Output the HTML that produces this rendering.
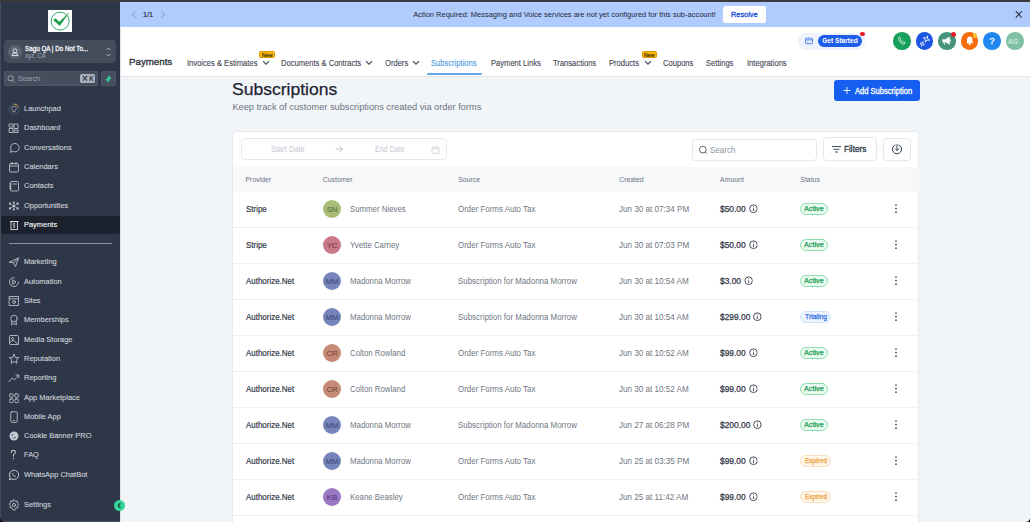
<!DOCTYPE html>
<html><head><meta charset="utf-8"><title>Subscriptions</title>
<style>
html,body{margin:0;padding:0;width:1030px;height:522px;overflow:hidden;background:#f1f5f8;font-family:"Liberation Sans", sans-serif;}
.a{position:absolute;display:block;}
.t{position:absolute;white-space:nowrap;line-height:1;}
</style></head><body>
<div class="a" style="left:0px;top:0px;width:1030px;height:2px;background:#3a3a3a"></div>
<div class="a" style="left:0px;top:2px;width:120px;height:520px;background:#2d3748"></div>
<div class="a" style="left:0px;top:2px;width:1px;height:520px;background:#454d5b"></div>
<div class="a" style="left:48px;top:10px;width:24px;height:22px;background:#fff"></div>
<svg class="a" style="left:48px;top:10px;" width="24" height="22" viewBox="0 0 24 22"><circle cx="12.1" cy="11.1" r="9" fill="none" stroke="#1f9d55" stroke-width="0.9"/><path d="M5.3 10 L7.6 8.4 L11.2 11.9 L20.9 2.9 L11.7 15.8 Z" fill="#1a9a4a" stroke="#1a9a4a" stroke-width="0.3" stroke-linejoin="round"/></svg>
<div class="a" style="left:4px;top:40px;width:112px;height:23px;background:#434c5b;border-radius:4px"></div>
<div class="a" style="left:8px;top:45px;width:14px;height:14px;background:#5a6372;border-radius:50%"></div>
<svg class="a" style="left:8px;top:45px;" width="14" height="14" viewBox="0 0 14 14"><circle cx="7" cy="5.8" r="2" fill="none" stroke="#e5e7eb" stroke-width="0.9"/><path d="M4 10.5 Q4 8 7 8 Q10 8 10 10.5 Z" fill="none" stroke="#e5e7eb" stroke-width="0.9"/></svg>
<div class="t" style="left:24.80px;top:45.86px;font-size:6.9px;color:#f3f4f6;font-weight:400;transform:scaleX(0.9098);transform-origin:0 0;-webkit-text-stroke:0.3px #f3f4f6">Sagu QA | Do Not To...</div>
<div class="t" style="left:24.80px;top:53.41px;font-size:6.6px;color:#a3aab5;font-weight:400;transform:scaleX(0.9067);transform-origin:0 0;">xyz, CA</div>
<svg class="a" style="left:104px;top:46px;" width="9" height="12" viewBox="0 0 9 12"><path d="M2.5 4 L4.5 2 L6.5 4 M2.5 8 L4.5 10 L6.5 8" fill="none" stroke="#c9ced6" stroke-width="0.8"/></svg>
<div class="a" style="left:4px;top:71px;width:94px;height:15px;background:#454e5d;border-radius:3px;box-shadow:inset 0 0 0 0.6px #56606f"></div>
<svg class="a" style="left:6px;top:74px;" width="10" height="10" viewBox="0 0 10 10"><circle cx="4.5" cy="4.3" r="2.6" fill="none" stroke="#a3aab5" stroke-width="0.9"/><path d="M6.4 6.2 L8.6 8.4" stroke="#a3aab5" stroke-width="1"/></svg>
<div class="t" style="left:17.70px;top:75.99px;font-size:7.1px;color:#9aa2ae;font-weight:400;">Search</div>
<div class="a" style="left:79.6px;top:74.3px;width:15.7px;height:8.7px;background:#a9b0bc;border-radius:1.5px"></div>
<svg class="a" style="left:81.5px;top:75.3px;" width="6" height="6.5" viewBox="0 0 6 6.5"><path d="M1.8 1.8 L4.2 4.7 M4.2 1.8 L1.8 4.7" stroke="#3a414d" stroke-width="1.1"/><circle cx="1.4" cy="1.4" r="0.8" fill="#3a414d"/><circle cx="4.6" cy="1.4" r="0.8" fill="#3a414d"/><circle cx="1.4" cy="5.1" r="0.8" fill="#3a414d"/><circle cx="4.6" cy="5.1" r="0.8" fill="#3a414d"/></svg>
<div class="t" style="left:89.20px;top:75.97px;font-size:6.3px;color:#2f3540;font-weight:700;">K</div>
<div class="a" style="left:101px;top:71px;width:15px;height:15px;background:#454e5d;border-radius:3px;box-shadow:inset 0 0 0 0.6px #56606f"></div>
<svg class="a" style="left:101px;top:71px;" width="15" height="15" viewBox="0 0 15 15"><path d="M7.6 4.5 L10.3 7.6 L8.2 8 L7.4 11.1 L4.7 8.6 L6.8 7.8 Z" fill="#34d399" stroke="#34d399" stroke-width="0.5" stroke-linejoin="round"/></svg>
<div class="a" style="left:1px;top:215.6px;width:118.8px;height:18.7px;background:#1c222d;border-radius:2px"></div>
<div class="a" style="left:9px;top:243px;width:103px;height:1px;background:#8a919c"></div>
<svg class="a" style="left:8px;top:102.7px;" width="12" height="12" viewBox="0 0 12 12"><circle cx="6" cy="6" r="5" fill="none" stroke="#566072" stroke-width="0.7"/><path d="M6 1 A5 5 0 0 1 10.5 4" fill="none" stroke="#d9a33a" stroke-width="0.9"/><path d="M6 3 Q8.3 3 8.3 5.3 Q8.3 6.8 7 7.3 L7 8.6 L5 8.6 L5 7.3 Q3.7 6.8 3.7 5.3 Q3.7 3 6 3 Z" fill="none" stroke="#a9afb9" stroke-width="0.75"/></svg>
<div class="t" style="left:23.80px;top:104.71px;font-size:7.9px;color:#d3d6dc;font-weight:400;transform:scaleX(0.9440);transform-origin:0 0;-webkit-text-stroke:0.1px #d3d6dc">Launchpad</div>
<svg class="a" style="left:8px;top:122px;" width="12" height="12" viewBox="0 0 12 12"><rect x="1.5" y="2" width="3.5" height="3" fill="none" stroke="#c3c8d0" stroke-width="0.85" stroke-linecap="round" stroke-linejoin="round"/><rect x="6.5" y="2" width="3.5" height="4.5" fill="none" stroke="#c3c8d0" stroke-width="0.85" stroke-linecap="round" stroke-linejoin="round"/><rect x="1.5" y="6.5" width="3.5" height="4" fill="none" stroke="#c3c8d0" stroke-width="0.85" stroke-linecap="round" stroke-linejoin="round"/><rect x="6.5" y="8" width="3.5" height="2.5" fill="none" stroke="#c3c8d0" stroke-width="0.85" stroke-linecap="round" stroke-linejoin="round"/></svg>
<div class="t" style="left:23.80px;top:124.01px;font-size:7.9px;color:#d3d6dc;font-weight:400;transform:scaleX(0.9440);transform-origin:0 0;-webkit-text-stroke:0.1px #d3d6dc">Dashboard</div>
<svg class="a" style="left:8px;top:141.5px;" width="12" height="12" viewBox="0 0 12 12"><path d="M2.5 10 L3.2 8 A4.3 4.3 0 1 1 5 9.6 Z" fill="none" stroke="#c3c8d0" stroke-width="0.85" stroke-linecap="round" stroke-linejoin="round"/></svg>
<div class="t" style="left:23.80px;top:143.51px;font-size:7.9px;color:#d3d6dc;font-weight:400;transform:scaleX(0.9440);transform-origin:0 0;-webkit-text-stroke:0.1px #d3d6dc">Conversations</div>
<svg class="a" style="left:8px;top:160.8px;" width="12" height="12" viewBox="0 0 12 12"><rect x="1.5" y="2.5" width="9" height="8.5" rx="1" fill="none" stroke="#c3c8d0" stroke-width="0.85" stroke-linecap="round" stroke-linejoin="round"/><path d="M1.5 5 L10.5 5 M4 1.3 L4 3.3 M8 1.3 L8 3.3" fill="none" stroke="#c3c8d0" stroke-width="0.85" stroke-linecap="round" stroke-linejoin="round"/></svg>
<div class="t" style="left:23.80px;top:162.81px;font-size:7.9px;color:#d3d6dc;font-weight:400;transform:scaleX(0.9440);transform-origin:0 0;-webkit-text-stroke:0.1px #d3d6dc">Calendars</div>
<svg class="a" style="left:8px;top:180px;" width="12" height="12" viewBox="0 0 12 12"><rect x="2.5" y="1.5" width="8" height="9.5" rx="1" fill="none" stroke="#c3c8d0" stroke-width="0.85" stroke-linecap="round" stroke-linejoin="round"/><path d="M1.5 4 L3.3 4 M1.5 6.3 L3.3 6.3 M1.5 8.6 L3.3 8.6 M5 4 L8.5 4" fill="none" stroke="#c3c8d0" stroke-width="0.85" stroke-linecap="round" stroke-linejoin="round"/></svg>
<div class="t" style="left:23.80px;top:182.01px;font-size:7.9px;color:#d3d6dc;font-weight:400;transform:scaleX(0.9440);transform-origin:0 0;-webkit-text-stroke:0.1px #d3d6dc">Contacts</div>
<svg class="a" style="left:8px;top:199.6px;" width="12" height="12" viewBox="0 0 12 12"><path d="M5.8 6 L5.8 2.6 M5.8 6 L2 3.6 M5.8 6 L9.6 3.6 M5.8 6 L2 8.4 M5.8 6 L9.6 8.4 M5.8 6 L5.8 9.4" stroke="#c3c8d0" stroke-width="0.6"/><circle cx="5.8" cy="6" r="1.3" fill="#c3c8d0"/><circle cx="5.8" cy="2.4" r="1" fill="#c3c8d0"/><rect x="1" y="2.6" width="2" height="2" fill="#c3c8d0"/><rect x="8.6" y="2.6" width="2" height="2" fill="#c3c8d0"/><rect x="1" y="7.4" width="2" height="2" fill="#c3c8d0"/><rect x="8.6" y="7.4" width="2" height="2" fill="#c3c8d0"/><circle cx="5.8" cy="9.6" r="1" fill="#c3c8d0"/></svg>
<div class="t" style="left:23.80px;top:201.61px;font-size:7.9px;color:#d3d6dc;font-weight:400;transform:scaleX(0.9440);transform-origin:0 0;-webkit-text-stroke:0.1px #d3d6dc">Opportunities</div>
<svg class="a" style="left:8px;top:218.9px;" width="12" height="12" viewBox="0 0 12 12"><rect x="3" y="2.6" width="6.4" height="8" fill="none" stroke="#e5e7eb" stroke-width="0.85"/><path d="M1.9 2.6 L10.5 2.6" stroke="#e5e7eb" stroke-width="0.9"/><path d="M7 4.6 L5.4 4.6 Q4.7 5.7 6 6.3 Q7.3 6.9 6.4 8.2 L5 8.2 M6.1 4 L6.1 8.9" fill="none" stroke="#e5e7eb" stroke-width="0.65"/></svg>
<div class="t" style="left:23.80px;top:220.91px;font-size:7.9px;color:#ffffff;font-weight:500;transform:scaleX(0.9440);transform-origin:0 0;-webkit-text-stroke:0.1px #ffffff">Payments</div>
<svg class="a" style="left:8px;top:255.89999999999998px;" width="12" height="12" viewBox="0 0 12 12"><path d="M1.5 6 L10.5 2 L7.5 10.5 L5.5 7 Z M5.5 7 L10.5 2" fill="none" stroke="#c3c8d0" stroke-width="0.85" stroke-linecap="round" stroke-linejoin="round"/></svg>
<div class="t" style="left:23.80px;top:257.91px;font-size:7.9px;color:#d3d6dc;font-weight:400;transform:scaleX(0.9440);transform-origin:0 0;-webkit-text-stroke:0.1px #d3d6dc">Marketing</div>
<svg class="a" style="left:8px;top:275.5px;" width="12" height="12" viewBox="0 0 12 12"><path d="M10.5 6 A4.5 4.5 0 1 1 6 1.5" fill="none" stroke="#c3c8d0" stroke-width="0.85" stroke-linecap="round" stroke-linejoin="round"/><path d="M5 4 L8 6 L5 8 Z" fill="none" stroke="#c3c8d0" stroke-width="0.85" stroke-linecap="round" stroke-linejoin="round"/></svg>
<div class="t" style="left:23.80px;top:277.51px;font-size:7.9px;color:#d3d6dc;font-weight:400;transform:scaleX(0.9440);transform-origin:0 0;-webkit-text-stroke:0.1px #d3d6dc">Automation</div>
<svg class="a" style="left:8px;top:294.8px;" width="12" height="12" viewBox="0 0 12 12"><rect x="1.5" y="1.5" width="9" height="9" fill="none" stroke="#c3c8d0" stroke-width="0.85" stroke-linecap="round" stroke-linejoin="round"/><path d="M1.5 3.8 L10.5 3.8" fill="none" stroke="#c3c8d0" stroke-width="0.85" stroke-linecap="round" stroke-linejoin="round"/><circle cx="6" cy="7" r="1.5" fill="none" stroke="#c3c8d0" stroke-width="0.85" stroke-linecap="round" stroke-linejoin="round"/></svg>
<div class="t" style="left:23.80px;top:296.81px;font-size:7.9px;color:#d3d6dc;font-weight:400;transform:scaleX(0.9440);transform-origin:0 0;-webkit-text-stroke:0.1px #d3d6dc">Sites</div>
<svg class="a" style="left:8px;top:314px;" width="12" height="12" viewBox="0 0 12 12"><circle cx="6" cy="4.5" r="3.3" fill="none" stroke="#c3c8d0" stroke-width="0.85" stroke-linecap="round" stroke-linejoin="round"/><path d="M4 7.3 L3.5 10.8 L6 9.5 L8.5 10.8 L8 7.3" fill="none" stroke="#c3c8d0" stroke-width="0.85" stroke-linecap="round" stroke-linejoin="round"/></svg>
<div class="t" style="left:23.80px;top:316.01px;font-size:7.9px;color:#d3d6dc;font-weight:400;transform:scaleX(0.9440);transform-origin:0 0;-webkit-text-stroke:0.1px #d3d6dc">Memberships</div>
<svg class="a" style="left:8px;top:333.6px;" width="12" height="12" viewBox="0 0 12 12"><rect x="1.5" y="1.5" width="9" height="9" rx="1" fill="none" stroke="#c3c8d0" stroke-width="0.85" stroke-linecap="round" stroke-linejoin="round"/><circle cx="4.5" cy="4.5" r="1" fill="none" stroke="#c3c8d0" stroke-width="0.85" stroke-linecap="round" stroke-linejoin="round"/><path d="M1.5 9 L5 6 L10.5 10.5" fill="none" stroke="#c3c8d0" stroke-width="0.85" stroke-linecap="round" stroke-linejoin="round"/></svg>
<div class="t" style="left:23.80px;top:335.61px;font-size:7.9px;color:#d3d6dc;font-weight:400;transform:scaleX(0.9440);transform-origin:0 0;-webkit-text-stroke:0.1px #d3d6dc">Media Storage</div>
<svg class="a" style="left:8px;top:352.8px;" width="12" height="12" viewBox="0 0 12 12"><path d="M6 1.3 L7.4 4.4 L10.7 4.7 L8.2 6.9 L9 10.2 L6 8.5 L3 10.2 L3.8 6.9 L1.3 4.7 L4.6 4.4 Z" fill="none" stroke="#c3c8d0" stroke-width="0.85" stroke-linecap="round" stroke-linejoin="round"/></svg>
<div class="t" style="left:23.80px;top:354.81px;font-size:7.9px;color:#d3d6dc;font-weight:400;transform:scaleX(0.9440);transform-origin:0 0;-webkit-text-stroke:0.1px #d3d6dc">Reputation</div>
<svg class="a" style="left:8px;top:372.2px;" width="12" height="12" viewBox="0 0 12 12"><path d="M1 9.5 L4.3 6 L6.3 7.8 L10.8 3.2 M8 3 L10.8 3 L10.8 5.8" fill="none" stroke="#c3c8d0" stroke-width="0.85" stroke-linecap="round" stroke-linejoin="round"/></svg>
<div class="t" style="left:23.80px;top:374.21px;font-size:7.9px;color:#d3d6dc;font-weight:400;transform:scaleX(0.9440);transform-origin:0 0;-webkit-text-stroke:0.1px #d3d6dc">Reporting</div>
<svg class="a" style="left:8px;top:391.7px;" width="12" height="12" viewBox="0 0 12 12"><rect x="1.6" y="1.8" width="3.6" height="3.6" rx="1.1" fill="none" stroke="#c3c8d0" stroke-width="0.85" stroke-linecap="round" stroke-linejoin="round"/><rect x="6.8" y="1.8" width="3.6" height="3.6" rx="1.1" fill="none" stroke="#c3c8d0" stroke-width="0.85" stroke-linecap="round" stroke-linejoin="round"/><rect x="1.6" y="7" width="3.6" height="3.6" rx="1.1" fill="none" stroke="#c3c8d0" stroke-width="0.85" stroke-linecap="round" stroke-linejoin="round"/><rect x="6.8" y="7" width="3.6" height="3.6" rx="1.1" fill="none" stroke="#c3c8d0" stroke-width="0.85" stroke-linecap="round" stroke-linejoin="round"/></svg>
<div class="t" style="left:23.80px;top:393.71px;font-size:7.9px;color:#d3d6dc;font-weight:400;transform:scaleX(0.9440);transform-origin:0 0;-webkit-text-stroke:0.1px #d3d6dc">App Marketplace</div>
<svg class="a" style="left:8px;top:410.6px;" width="12" height="12" viewBox="0 0 12 12"><rect x="2.8" y="0.8" width="6.4" height="10.5" rx="1" fill="none" stroke="#c3c8d0" stroke-width="0.85" stroke-linecap="round" stroke-linejoin="round"/><path d="M5.5 9.5 L6.5 9.5" fill="none" stroke="#c3c8d0" stroke-width="0.85" stroke-linecap="round" stroke-linejoin="round"/></svg>
<div class="t" style="left:23.80px;top:412.61px;font-size:7.9px;color:#d3d6dc;font-weight:400;transform:scaleX(0.9440);transform-origin:0 0;-webkit-text-stroke:0.1px #d3d6dc">Mobile App</div>
<svg class="a" style="left:8px;top:430.2px;" width="12" height="12" viewBox="0 0 12 12"><circle cx="6" cy="6" r="4.5" fill="#c3c8d0"/><circle cx="4.5" cy="5" r="0.7" fill="#2d3748"/><circle cx="7" cy="7.5" r="0.7" fill="#2d3748"/><circle cx="5" cy="8" r="0.5" fill="#2d3748"/></svg>
<div class="t" style="left:23.80px;top:432.21px;font-size:7.9px;color:#d3d6dc;font-weight:400;transform:scaleX(0.9440);transform-origin:0 0;-webkit-text-stroke:0.1px #d3d6dc">Cookie Banner PRO</div>
<svg class="a" style="left:8px;top:449.4px;" width="12" height="12" viewBox="0 0 12 12"><path d="M3.2 3.6 Q3.2 1.2 5.3 1.2 Q7.4 1.2 7.4 3.3 Q7.4 4.6 5.5 5.6 L5.5 7.2" fill="none" stroke="#c3c8d0" stroke-width="1.05" stroke-linecap="round"/><circle cx="5.5" cy="9.4" r="0.65" fill="#c3c8d0"/></svg>
<div class="t" style="left:23.80px;top:451.41px;font-size:7.9px;color:#d3d6dc;font-weight:400;transform:scaleX(0.9440);transform-origin:0 0;-webkit-text-stroke:0.1px #d3d6dc">FAQ</div>
<svg class="a" style="left:8px;top:469px;" width="12" height="12" viewBox="0 0 12 12"><path d="M1.3 10.7 L2.1 8.1 A4.6 4.6 0 1 1 4 9.9 Z" fill="none" stroke="#c3c8d0" stroke-width="1" stroke-linejoin="round"/><path d="M4.3 4.2 Q4.2 7.6 7.7 7.7 L8 6.9 L7 6.4 L6.5 6.9 Q5.3 6.4 4.9 5.2 L5.4 4.7 L5 3.8 Z" fill="#c3c8d0"/></svg>
<div class="t" style="left:23.80px;top:471.01px;font-size:7.9px;color:#d3d6dc;font-weight:400;transform:scaleX(0.9440);transform-origin:0 0;-webkit-text-stroke:0.1px #d3d6dc">WhatsApp ChatBot</div>
<svg class="a" style="left:8px;top:499px;" width="12" height="12" viewBox="0 0 12 12"><path d="M6 0.8 L7.2 2.2 L9.3 1.9 L9.3 3.9 L10.9 5.2 L9.6 6.6 L10 8.7 L8 8.9 L7 10.8 L6 11.2 L5 10.8 L4 8.9 L2 8.7 L2.4 6.6 L1.1 5.2 L2.7 3.9 L2.7 1.9 L4.8 2.2 Z" fill="none" stroke="#c3c8d0" stroke-width="0.85" stroke-linecap="round" stroke-linejoin="round"/><circle cx="6" cy="6" r="1.6" fill="none" stroke="#c3c8d0" stroke-width="0.85" stroke-linecap="round" stroke-linejoin="round"/></svg>
<div class="t" style="left:23.80px;top:501.01px;font-size:7.9px;color:#d3d6dc;font-weight:400;transform:scaleX(0.9440);transform-origin:0 0;-webkit-text-stroke:0.1px #d3d6dc">Settings</div>
<div class="a" style="left:120px;top:2px;width:910px;height:25px;background:#b0cbfd"></div>
<svg class="a" style="left:130px;top:10px;" width="8" height="9" viewBox="0 0 8 9"><path d="M5.5 1.5 L2.5 4.6 L5.5 7.7" fill="none" stroke="#7d8ba3" stroke-width="0.9"/></svg>
<div class="t" style="left:143.10px;top:10.88px;font-size:7.7px;color:#2d3340;font-weight:400;transform:scaleX(0.9544);transform-origin:0 0;-webkit-text-stroke:0.2px #2d3340">1/1</div>
<svg class="a" style="left:159px;top:10px;" width="8" height="9" viewBox="0 0 8 9"><path d="M2.5 1.5 L5.5 4.6 L2.5 7.7" fill="none" stroke="#7d8ba3" stroke-width="0.9"/></svg>
<div class="t" style="left:413.20px;top:10.85px;font-size:7.5px;color:#1f2937;font-weight:400;">Action Required: Messaging and Voice services are not yet configured for this sub-account!</div>
<div class="a" style="left:723px;top:6px;width:43px;height:17px;background:#fff;border-radius:2.5px"></div>
<div class="t" style="left:731.30px;top:10.98px;font-size:7.7px;color:#1d4fd8;font-weight:400;transform:scaleX(0.9575);transform-origin:0 0;-webkit-text-stroke:0.3px #1d4fd8">Resolve</div>
<svg class="a" style="left:1014px;top:10px;" width="9" height="9" viewBox="0 0 9 9"><path d="M1.8 1.2 L7.8 7.7 M7.8 1.2 L1.8 7.7" stroke="#2f3646" stroke-width="1.1"/></svg>
<div class="a" style="left:120px;top:27px;width:910px;height:49px;background:#ffffff"></div>
<div class="a" style="left:120px;top:75.5px;width:910px;height:1.2px;background:#e4e7eb"></div>
<div class="a" style="left:120px;top:76.7px;width:910px;height:446px;background:#f1f5f8"></div>
<div class="a" style="left:120px;top:27px;width:1px;height:495px;background:#dfe3e8"></div>
<div class="t" style="left:129.10px;top:57.29px;font-size:9.7px;color:#2f3542;font-weight:400;-webkit-text-stroke:0.35px #2f3542">Payments</div>
<div class="t" style="left:187.20px;top:59.86px;font-size:8.2px;color:#3f4654;font-weight:400;transform:scaleX(0.9268);transform-origin:0 0;-webkit-text-stroke:0.1px #3f4654">Invoices &amp; Estimates</div>
<div class="t" style="left:281.20px;top:59.86px;font-size:8.2px;color:#3f4654;font-weight:400;transform:scaleX(0.9268);transform-origin:0 0;-webkit-text-stroke:0.1px #3f4654">Documents &amp; Contracts</div>
<div class="t" style="left:384.50px;top:59.86px;font-size:8.2px;color:#3f4654;font-weight:400;transform:scaleX(0.9268);transform-origin:0 0;-webkit-text-stroke:0.1px #3f4654">Orders</div>
<div class="t" style="left:431.00px;top:59.86px;font-size:8.2px;color:#4b9be6;font-weight:400;transform:scaleX(0.9268);transform-origin:0 0;-webkit-text-stroke:0.1px #4b9be6">Subscriptions</div>
<div class="t" style="left:490.50px;top:59.86px;font-size:8.2px;color:#3f4654;font-weight:400;transform:scaleX(0.9268);transform-origin:0 0;-webkit-text-stroke:0.1px #3f4654">Payment Links</div>
<div class="t" style="left:552.60px;top:59.86px;font-size:8.2px;color:#3f4654;font-weight:400;transform:scaleX(0.9268);transform-origin:0 0;-webkit-text-stroke:0.1px #3f4654">Transactions</div>
<div class="t" style="left:609.30px;top:59.86px;font-size:8.2px;color:#3f4654;font-weight:400;transform:scaleX(0.9268);transform-origin:0 0;-webkit-text-stroke:0.1px #3f4654">Products</div>
<div class="t" style="left:663.30px;top:59.86px;font-size:8.2px;color:#3f4654;font-weight:400;transform:scaleX(0.9268);transform-origin:0 0;-webkit-text-stroke:0.1px #3f4654">Coupons</div>
<div class="t" style="left:706.00px;top:59.86px;font-size:8.2px;color:#3f4654;font-weight:400;transform:scaleX(0.9268);transform-origin:0 0;-webkit-text-stroke:0.1px #3f4654">Settings</div>
<div class="t" style="left:746.80px;top:59.86px;font-size:8.2px;color:#3f4654;font-weight:400;transform:scaleX(0.9268);transform-origin:0 0;-webkit-text-stroke:0.1px #3f4654">Integrations</div>
<svg class="a" style="left:261.5px;top:59.9px;" width="8" height="6" viewBox="0 0 8 6"><path d="M1.1 1.3 L4 4.1 L6.9 1.3" fill="none" stroke="#4b5261" stroke-width="1.2"/></svg>
<svg class="a" style="left:365px;top:59.9px;" width="8" height="6" viewBox="0 0 8 6"><path d="M1.1 1.3 L4 4.1 L6.9 1.3" fill="none" stroke="#4b5261" stroke-width="1.2"/></svg>
<svg class="a" style="left:411.5px;top:59.9px;" width="8" height="6" viewBox="0 0 8 6"><path d="M1.1 1.3 L4 4.1 L6.9 1.3" fill="none" stroke="#4b5261" stroke-width="1.2"/></svg>
<svg class="a" style="left:643.5px;top:59.9px;" width="8" height="6" viewBox="0 0 8 6"><path d="M1.1 1.3 L4 4.1 L6.9 1.3" fill="none" stroke="#4b5261" stroke-width="1.2"/></svg>
<div class="a" style="left:426.6px;top:73.2px;width:55px;height:2px;background:#5fa8ee;border-radius:1px"></div>
<div class="a" style="left:259.2px;top:51.3px;width:15.6px;height:7.2px;background:#f6b40b;border:0.6px solid #e09a00;border-radius:1.5px;box-sizing:border-box"></div>
<div class="t" style="left:261.80px;top:52.73px;font-size:5.4px;color:#4a3800;font-weight:400;transform:scaleX(0.9632);transform-origin:0 0;-webkit-text-stroke:0.2px #4a3800">New</div>
<div class="a" style="left:641.5px;top:51.3px;width:15.6px;height:7.2px;background:#f6b40b;border:0.6px solid #e09a00;border-radius:1.5px;box-sizing:border-box"></div>
<div class="t" style="left:644.10px;top:52.73px;font-size:5.4px;color:#4a3800;font-weight:400;transform:scaleX(0.9632);transform-origin:0 0;-webkit-text-stroke:0.2px #4a3800">New</div>
<div class="a" style="left:798px;top:33px;width:67px;height:16.5px;background:#eef2fb;border-radius:8px"></div>
<svg class="a" style="left:804px;top:37px;" width="10" height="8" viewBox="0 0 10 8"><rect x="1.5" y="1.2" width="7" height="5.4" rx="0.7" fill="none" stroke="#4a7ce6" stroke-width="0.9"/><path d="M1.5 2.9 L8.5 2.9" stroke="#4a7ce6" stroke-width="0.9"/><path d="M2.6 5 L4.4 5" stroke="#4a7ce6" stroke-width="0.6"/></svg>
<div class="a" style="left:818px;top:35px;width:43.6px;height:12px;background:#1f5ee8;border-radius:6px"></div>
<div class="t" style="left:822.20px;top:38.01px;font-size:6.6px;color:#ffffff;font-weight:700;">Get Started</div>
<div class="a" style="left:860.2px;top:31.6px;width:4.5px;height:4.5px;background:#e11d2a;border-radius:50%"></div>
<div class="a" style="left:893.3px;top:32.2px;width:17.4px;height:17.4px;background:#16a05a;border-radius:50%"></div>
<svg class="a" style="left:893.3px;top:32.2px;" width="17.4" height="17.4" viewBox="0 0 17.4 17.4"><path d="M6 5.3 Q6.4 4.8 7 5.4 L7.8 6.6 Q8 7.1 7.5 7.5 Q8.1 9.2 9.7 10 Q10.1 9.5 10.6 9.7 L11.8 10.4 Q12.3 10.9 11.8 11.4 Q10.8 12.5 9.3 11.8 Q6.5 10.3 5.6 7.3 Q5.3 6 6 5.3 Z" fill="none" stroke="#fff" stroke-width="0.8"/></svg>
<div class="a" style="left:916.0px;top:32.2px;width:17.4px;height:17.4px;background:#1d56e0;border-radius:50%"></div>
<svg class="a" style="left:916.0px;top:32.2px;" width="17.4" height="17.4" viewBox="0 0 17.4 17.4"><path d="M10.4 3.6 L11.2 6.2 L13.8 7 L11.2 7.8 L10.4 10.4 L9.6 7.8 L7 7 L9.6 6.2 Z" fill="none" stroke="#fff" stroke-width="0.75" stroke-linejoin="round" transform="rotate(20 10.4 7)"/><path d="M6.2 9.6 L6.8 11.4 L8.6 12 L6.8 12.6 L6.2 14.4 L5.6 12.6 L3.8 12 L5.6 11.4 Z" fill="none" stroke="#fff" stroke-width="0.7" stroke-linejoin="round" transform="rotate(20 6.2 12)"/></svg>
<div class="a" style="left:938.3px;top:32.2px;width:17.4px;height:17.4px;background:#45937a;border-radius:50%"></div>
<svg class="a" style="left:938.3px;top:32.2px;" width="17.4" height="17.4" viewBox="0 0 17.4 17.4"><path d="M4.6 7.4 L7.2 7.4 L11.6 4.8 L11.6 12.4 L7.2 9.9 L4.6 9.9 Z" fill="#fff" stroke="#fff" stroke-width="0.4" stroke-linejoin="round"/><path d="M5.8 9.9 L6.6 12.6" stroke="#fff" stroke-width="1.1"/><path d="M12.6 7.6 L12.6 9.6" stroke="#fff" stroke-width="0.8"/></svg>
<div class="a" style="left:950.5px;top:31.8px;width:5.6px;height:5.6px;background:#e11d2a;border-radius:50%"></div>
<div class="a" style="left:961.0px;top:32.2px;width:17.4px;height:17.4px;background:#f86c0c;border-radius:50%"></div>
<svg class="a" style="left:961.0px;top:32.2px;" width="17.4" height="17.4" viewBox="0 0 17.4 17.4"><path d="M8.7 4.5 Q11.5 4.8 11.5 8 L11.5 10.3 L12.5 11.3 L5 11.3 L6 10.3 L6 8 Q6 4.8 8.7 4.5 Z" fill="#fff"/><circle cx="8.7" cy="12.3" r="1" fill="#fff"/></svg>
<div class="a" style="left:972.8px;top:33.2px;width:4.4px;height:4.4px;background:#f7c331;border-radius:50%"></div>
<div class="a" style="left:983.3px;top:32.2px;width:17.4px;height:17.4px;background:#1e88f0;border-radius:50%"></div>
<svg class="a" style="left:983.3px;top:32.2px;" width="17.4" height="17.4" viewBox="0 0 17.4 17.4"></svg>
<div class="t" style="left:989.50px;top:37.18px;font-size:9px;color:#ffffff;font-weight:400;-webkit-text-stroke:0.3px #fff">?</div>
<div class="a" style="left:1006.3px;top:32.2px;width:17.4px;height:17.4px;background:#7fbfa5;border-radius:50%"></div>
<svg class="a" style="left:1006.3px;top:32.2px;" width="17.4" height="17.4" viewBox="0 0 17.4 17.4"></svg>
<div class="t" style="left:1008.00px;top:37.87px;font-size:7.6px;color:#e6f3ec;font-weight:400;">AS</div>
<div class="t" style="left:232.40px;top:82.45px;font-size:16.6px;color:#1f2433;font-weight:400;transform:scaleX(1.0560);transform-origin:0 0;-webkit-text-stroke:0.25px #1f2433">Subscriptions</div>
<div class="t" style="left:232.40px;top:102.78px;font-size:9.24px;color:#6b7280;font-weight:400;">Keep track of customer subscriptions created via order forms</div>
<div class="a" style="left:834.2px;top:80.2px;width:85.7px;height:21.2px;background:#155eef;border-radius:3px"></div>
<svg class="a" style="left:843px;top:86px;" width="8" height="9" viewBox="0 0 8 9"><path d="M4 1 L4 8 M0.5 4.5 L7.5 4.5" stroke="#fff" stroke-width="0.9"/></svg>
<div class="t" style="left:854.90px;top:86.87px;font-size:8.3px;color:#ffffff;font-weight:400;transform:scaleX(0.9118);transform-origin:0 0;-webkit-text-stroke:0.3px #fff">Add Subscription</div>
<div class="a" style="left:232.1px;top:130.6px;width:687.3px;height:400px;background:#fff;border:0.9px solid #e5e9ee;border-radius:4px;box-sizing:border-box"></div>
<div class="a" style="left:241.1px;top:138.2px;width:205.6px;height:22.2px;border:0.8px solid #e6e8ec;border-radius:3.5px;box-sizing:border-box"></div>
<div class="t" style="left:271.00px;top:145.56px;font-size:8.2px;color:#c5c9d0;font-weight:400;transform:scaleX(0.9166);transform-origin:0 0;">Start Date</div>
<svg class="a" style="left:334px;top:145px;" width="10" height="8" viewBox="0 0 10 8"><path d="M1.5 4 L8.5 4 M5.5 1 L8.5 4 L5.5 7" fill="none" stroke="#a9aeb6" stroke-width="0.75"/></svg>
<div class="t" style="left:375.00px;top:145.56px;font-size:8.2px;color:#c5c9d0;font-weight:400;transform:scaleX(0.8582);transform-origin:0 0;">End Date</div>
<svg class="a" style="left:431px;top:145.5px;" width="9" height="9" viewBox="0 0 9 9"><rect x="1" y="1" width="7" height="6.3" rx="0.7" fill="none" stroke="#c9cdd3" stroke-width="0.8"/><path d="M1 2.6 L8 2.6" stroke="#c9cdd3" stroke-width="0.8"/></svg>
<div class="a" style="left:691.6px;top:138.5px;width:125.2px;height:22.1px;border:0.8px solid #e4e8ed;border-radius:3.5px;box-sizing:border-box"></div>
<svg class="a" style="left:698px;top:144.6px;" width="10" height="10" viewBox="0 0 10 10"><circle cx="4.8" cy="4.6" r="3.4" fill="none" stroke="#4b5563" stroke-width="0.9"/><path d="M7.2 7.2 L8.8 8.8" stroke="#4b5563" stroke-width="0.9"/></svg>
<div class="t" style="left:709.70px;top:145.69px;font-size:8.4px;color:#8b93a0;font-weight:400;transform:scaleX(0.9568);transform-origin:0 0;">Search</div>
<div class="a" style="left:822.9px;top:137px;width:54.2px;height:24.3px;border:0.8px solid #e4e8ed;border-radius:3.5px;box-sizing:border-box"></div>
<svg class="a" style="left:831px;top:145px;" width="11" height="9" viewBox="0 0 11 9"><path d="M1 1.5 L10 1.5 M2.5 4.3 L8.5 4.3 M4 7 L7 7" stroke="#374151" stroke-width="0.95"/></svg>
<div class="t" style="left:844.10px;top:145.07px;font-size:8.3px;color:#2f3646;font-weight:400;transform:scaleX(0.9870);transform-origin:0 0;-webkit-text-stroke:0.3px #2f3646">Filters</div>
<div class="a" style="left:883.2px;top:137.5px;width:27.4px;height:23.3px;border:0.8px solid #e4e8ed;border-radius:3.5px;box-sizing:border-box"></div>
<svg class="a" style="left:890.6px;top:143.3px;" width="12" height="12" viewBox="0 0 12 12"><path d="M4.3 1.9 A4.6 4.6 0 1 0 7.7 1.9" fill="none" stroke="#374151" stroke-width="1"/><path d="M6 1.2 L6 7.6 M4 5.6 L6 7.6 L8 5.6" fill="none" stroke="#374151" stroke-width="1"/></svg>
<div class="a" style="left:232.8px;top:166.8px;width:686.3px;height:25.2px;background:#f7f8fa"></div>
<div class="t" style="left:245.50px;top:177.16px;font-size:6.9px;color:#6b7280;font-weight:400;">Provider</div>
<div class="t" style="left:322.80px;top:177.16px;font-size:6.9px;color:#6b7280;font-weight:400;">Customer</div>
<div class="t" style="left:458.20px;top:177.16px;font-size:6.9px;color:#6b7280;font-weight:400;">Source</div>
<div class="t" style="left:619.20px;top:177.16px;font-size:6.9px;color:#6b7280;font-weight:400;">Created</div>
<div class="t" style="left:720.10px;top:177.16px;font-size:6.9px;color:#6b7280;font-weight:400;">Amount</div>
<div class="t" style="left:800.30px;top:177.16px;font-size:6.9px;color:#6b7280;font-weight:400;">Status</div>
<div class="a" style="left:232.8px;top:226.7px;width:686.3px;height:0.9px;background:#eef0f3"></div>
<div class="t" style="left:245.50px;top:205.30px;font-size:8.5px;color:#2f3646;font-weight:400;transform:scaleX(0.9353);transform-origin:0 0;-webkit-text-stroke:0.18px #2f3646">Stripe</div>
<div class="a" style="left:322.8px;top:199.9px;width:18.4px;height:18.4px;background:#a9bd76;border-radius:50%"></div>
<div class="t" style="left:322.80px;top:205.53px;font-size:8px;color:#466a3a;font-weight:400;width:18.4px;text-align:center;letter-spacing:-0.2px">SN</div>
<div class="t" style="left:350.00px;top:205.30px;font-size:8.5px;color:#6f7684;font-weight:400;transform:scaleX(0.9212);transform-origin:0 0;">Summer Nieves</div>
<div class="t" style="left:458.20px;top:205.30px;font-size:8.5px;color:#6f7684;font-weight:400;transform:scaleX(0.9329);transform-origin:0 0;">Order Forms Auto Tax</div>
<div class="t" style="left:619.10px;top:205.22px;font-size:8.6px;color:#6f7684;font-weight:400;transform:scaleX(0.9419);transform-origin:0 0;">Jun 30 at 07:34 PM</div>
<div class="t" style="left:720.10px;top:205.14px;font-size:8.7px;color:#2f3646;font-weight:400;transform:scaleX(0.9650);transform-origin:0 0;-webkit-text-stroke:0.25px #2f3646">$50.00<svg width="9.4" height="9.4" viewBox="0 0 9.4 9.4" style="margin-left:3px;vertical-align:top;position:relative;top:-0.9px"><circle cx="4.7" cy="4.7" r="3.9" fill="none" stroke="#3b4350" stroke-width="0.95"/><path d="M4.7 4.3 L4.7 7" stroke="#3b4350" stroke-width="0.95"/><circle cx="4.7" cy="2.8" r="0.55" fill="#3b4350"/></svg></div>
<div class="a" style="left:800.3px;top:202.9px;width:28px;height:12.2px;background:#ecfbf2;border:0.9px solid #8be0ae;border-radius:6px;box-sizing:border-box"></div>
<div class="t" style="left:804.45px;top:206.31px;font-size:6.6px;color:#1e9e55;font-weight:400;transform:scaleX(1.0963);transform-origin:0 0;-webkit-text-stroke:0.25px #1e9e55">Active</div>
<svg class="a" style="left:893.5px;top:204.1px;" width="4" height="10" viewBox="0 0 4 10"><circle cx="2" cy="1" r="0.85" fill="#374151"/><circle cx="2" cy="4.6" r="0.85" fill="#374151"/><circle cx="2" cy="8.2" r="0.85" fill="#374151"/></svg>
<div class="a" style="left:232.8px;top:262.7px;width:686.3px;height:0.9px;background:#eef0f3"></div>
<div class="t" style="left:245.50px;top:241.30px;font-size:8.5px;color:#2f3646;font-weight:400;transform:scaleX(0.9353);transform-origin:0 0;-webkit-text-stroke:0.18px #2f3646">Stripe</div>
<div class="a" style="left:322.8px;top:235.9px;width:18.4px;height:18.4px;background:#c97987;border-radius:50%"></div>
<div class="t" style="left:322.80px;top:241.53px;font-size:8px;color:#6b3540;font-weight:400;width:18.4px;text-align:center;letter-spacing:-0.2px">YC</div>
<div class="t" style="left:350.00px;top:241.30px;font-size:8.5px;color:#6f7684;font-weight:400;transform:scaleX(0.9212);transform-origin:0 0;">Yvette Carney</div>
<div class="t" style="left:458.20px;top:241.30px;font-size:8.5px;color:#6f7684;font-weight:400;transform:scaleX(0.9329);transform-origin:0 0;">Order Forms Auto Tax</div>
<div class="t" style="left:619.10px;top:241.22px;font-size:8.6px;color:#6f7684;font-weight:400;transform:scaleX(0.9419);transform-origin:0 0;">Jun 30 at 07:03 PM</div>
<div class="t" style="left:720.10px;top:241.14px;font-size:8.7px;color:#2f3646;font-weight:400;transform:scaleX(0.9650);transform-origin:0 0;-webkit-text-stroke:0.25px #2f3646">$50.00<svg width="9.4" height="9.4" viewBox="0 0 9.4 9.4" style="margin-left:3px;vertical-align:top;position:relative;top:-0.9px"><circle cx="4.7" cy="4.7" r="3.9" fill="none" stroke="#3b4350" stroke-width="0.95"/><path d="M4.7 4.3 L4.7 7" stroke="#3b4350" stroke-width="0.95"/><circle cx="4.7" cy="2.8" r="0.55" fill="#3b4350"/></svg></div>
<div class="a" style="left:800.3px;top:238.9px;width:28px;height:12.2px;background:#ecfbf2;border:0.9px solid #8be0ae;border-radius:6px;box-sizing:border-box"></div>
<div class="t" style="left:804.45px;top:242.31px;font-size:6.6px;color:#1e9e55;font-weight:400;transform:scaleX(1.0963);transform-origin:0 0;-webkit-text-stroke:0.25px #1e9e55">Active</div>
<svg class="a" style="left:893.5px;top:240.1px;" width="4" height="10" viewBox="0 0 4 10"><circle cx="2" cy="1" r="0.85" fill="#374151"/><circle cx="2" cy="4.6" r="0.85" fill="#374151"/><circle cx="2" cy="8.2" r="0.85" fill="#374151"/></svg>
<div class="a" style="left:232.8px;top:298.7px;width:686.3px;height:0.9px;background:#eef0f3"></div>
<div class="t" style="left:245.50px;top:277.30px;font-size:8.5px;color:#2f3646;font-weight:400;transform:scaleX(0.9353);transform-origin:0 0;-webkit-text-stroke:0.18px #2f3646">Authorize.Net</div>
<div class="a" style="left:322.8px;top:271.90000000000003px;width:18.4px;height:18.4px;background:#7686bd;border-radius:50%"></div>
<div class="t" style="left:322.80px;top:277.53px;font-size:8px;color:#3a4570;font-weight:400;width:18.4px;text-align:center;letter-spacing:-0.2px">MM</div>
<div class="t" style="left:350.00px;top:277.30px;font-size:8.5px;color:#6f7684;font-weight:400;transform:scaleX(0.9212);transform-origin:0 0;">Madonna Morrow</div>
<div class="t" style="left:458.20px;top:277.30px;font-size:8.5px;color:#6f7684;font-weight:400;transform:scaleX(0.9329);transform-origin:0 0;">Subscription for Madonna Morrow</div>
<div class="t" style="left:619.10px;top:277.22px;font-size:8.6px;color:#6f7684;font-weight:400;transform:scaleX(0.9419);transform-origin:0 0;">Jun 30 at 10:54 AM</div>
<div class="t" style="left:720.10px;top:277.14px;font-size:8.7px;color:#2f3646;font-weight:400;transform:scaleX(0.9650);transform-origin:0 0;-webkit-text-stroke:0.25px #2f3646">$3.00<svg width="9.4" height="9.4" viewBox="0 0 9.4 9.4" style="margin-left:3px;vertical-align:top;position:relative;top:-0.9px"><circle cx="4.7" cy="4.7" r="3.9" fill="none" stroke="#3b4350" stroke-width="0.95"/><path d="M4.7 4.3 L4.7 7" stroke="#3b4350" stroke-width="0.95"/><circle cx="4.7" cy="2.8" r="0.55" fill="#3b4350"/></svg></div>
<div class="a" style="left:800.3px;top:274.90000000000003px;width:28px;height:12.2px;background:#ecfbf2;border:0.9px solid #8be0ae;border-radius:6px;box-sizing:border-box"></div>
<div class="t" style="left:804.45px;top:278.31px;font-size:6.6px;color:#1e9e55;font-weight:400;transform:scaleX(1.0963);transform-origin:0 0;-webkit-text-stroke:0.25px #1e9e55">Active</div>
<svg class="a" style="left:893.5px;top:276.1px;" width="4" height="10" viewBox="0 0 4 10"><circle cx="2" cy="1" r="0.85" fill="#374151"/><circle cx="2" cy="4.6" r="0.85" fill="#374151"/><circle cx="2" cy="8.2" r="0.85" fill="#374151"/></svg>
<div class="a" style="left:232.8px;top:334.7px;width:686.3px;height:0.9px;background:#eef0f3"></div>
<div class="t" style="left:245.50px;top:313.30px;font-size:8.5px;color:#2f3646;font-weight:400;transform:scaleX(0.9353);transform-origin:0 0;-webkit-text-stroke:0.18px #2f3646">Authorize.Net</div>
<div class="a" style="left:322.8px;top:307.90000000000003px;width:18.4px;height:18.4px;background:#7686bd;border-radius:50%"></div>
<div class="t" style="left:322.80px;top:313.53px;font-size:8px;color:#3a4570;font-weight:400;width:18.4px;text-align:center;letter-spacing:-0.2px">MM</div>
<div class="t" style="left:350.00px;top:313.30px;font-size:8.5px;color:#6f7684;font-weight:400;transform:scaleX(0.9212);transform-origin:0 0;">Madonna Morrow</div>
<div class="t" style="left:458.20px;top:313.30px;font-size:8.5px;color:#6f7684;font-weight:400;transform:scaleX(0.9329);transform-origin:0 0;">Subscription for Madonna Morrow</div>
<div class="t" style="left:619.10px;top:313.22px;font-size:8.6px;color:#6f7684;font-weight:400;transform:scaleX(0.9419);transform-origin:0 0;">Jun 30 at 10:54 AM</div>
<div class="t" style="left:720.10px;top:313.14px;font-size:8.7px;color:#2f3646;font-weight:400;transform:scaleX(0.9650);transform-origin:0 0;-webkit-text-stroke:0.25px #2f3646">$299.00<svg width="9.4" height="9.4" viewBox="0 0 9.4 9.4" style="margin-left:3px;vertical-align:top;position:relative;top:-0.9px"><circle cx="4.7" cy="4.7" r="3.9" fill="none" stroke="#3b4350" stroke-width="0.95"/><path d="M4.7 4.3 L4.7 7" stroke="#3b4350" stroke-width="0.95"/><circle cx="4.7" cy="2.8" r="0.55" fill="#3b4350"/></svg></div>
<div class="a" style="left:800.3px;top:310.90000000000003px;width:31px;height:12.2px;background:#eef4fe;border:0.9px solid #cfe0fb;border-radius:6px;box-sizing:border-box"></div>
<div class="t" style="left:804.80px;top:314.31px;font-size:6.6px;color:#2f6fe6;font-weight:400;transform:scaleX(1.0292);transform-origin:0 0;-webkit-text-stroke:0.25px #2f6fe6">Trialing</div>
<svg class="a" style="left:893.5px;top:312.1px;" width="4" height="10" viewBox="0 0 4 10"><circle cx="2" cy="1" r="0.85" fill="#374151"/><circle cx="2" cy="4.6" r="0.85" fill="#374151"/><circle cx="2" cy="8.2" r="0.85" fill="#374151"/></svg>
<div class="a" style="left:232.8px;top:370.7px;width:686.3px;height:0.9px;background:#eef0f3"></div>
<div class="t" style="left:245.50px;top:349.30px;font-size:8.5px;color:#2f3646;font-weight:400;transform:scaleX(0.9353);transform-origin:0 0;-webkit-text-stroke:0.18px #2f3646">Authorize.Net</div>
<div class="a" style="left:322.8px;top:343.90000000000003px;width:18.4px;height:18.4px;background:#c68a76;border-radius:50%"></div>
<div class="t" style="left:322.80px;top:349.53px;font-size:8px;color:#6b3f33;font-weight:400;width:18.4px;text-align:center;letter-spacing:-0.2px">CR</div>
<div class="t" style="left:350.00px;top:349.30px;font-size:8.5px;color:#6f7684;font-weight:400;transform:scaleX(0.9212);transform-origin:0 0;">Colton Rowland</div>
<div class="t" style="left:458.20px;top:349.30px;font-size:8.5px;color:#6f7684;font-weight:400;transform:scaleX(0.9329);transform-origin:0 0;">Order Forms Auto Tax</div>
<div class="t" style="left:619.10px;top:349.22px;font-size:8.6px;color:#6f7684;font-weight:400;transform:scaleX(0.9419);transform-origin:0 0;">Jun 30 at 10:52 AM</div>
<div class="t" style="left:720.10px;top:349.14px;font-size:8.7px;color:#2f3646;font-weight:400;transform:scaleX(0.9650);transform-origin:0 0;-webkit-text-stroke:0.25px #2f3646">$99.00<svg width="9.4" height="9.4" viewBox="0 0 9.4 9.4" style="margin-left:3px;vertical-align:top;position:relative;top:-0.9px"><circle cx="4.7" cy="4.7" r="3.9" fill="none" stroke="#3b4350" stroke-width="0.95"/><path d="M4.7 4.3 L4.7 7" stroke="#3b4350" stroke-width="0.95"/><circle cx="4.7" cy="2.8" r="0.55" fill="#3b4350"/></svg></div>
<div class="a" style="left:800.3px;top:346.90000000000003px;width:28px;height:12.2px;background:#ecfbf2;border:0.9px solid #8be0ae;border-radius:6px;box-sizing:border-box"></div>
<div class="t" style="left:804.45px;top:350.31px;font-size:6.6px;color:#1e9e55;font-weight:400;transform:scaleX(1.0963);transform-origin:0 0;-webkit-text-stroke:0.25px #1e9e55">Active</div>
<svg class="a" style="left:893.5px;top:348.1px;" width="4" height="10" viewBox="0 0 4 10"><circle cx="2" cy="1" r="0.85" fill="#374151"/><circle cx="2" cy="4.6" r="0.85" fill="#374151"/><circle cx="2" cy="8.2" r="0.85" fill="#374151"/></svg>
<div class="a" style="left:232.8px;top:406.7px;width:686.3px;height:0.9px;background:#eef0f3"></div>
<div class="t" style="left:245.50px;top:385.30px;font-size:8.5px;color:#2f3646;font-weight:400;transform:scaleX(0.9353);transform-origin:0 0;-webkit-text-stroke:0.18px #2f3646">Authorize.Net</div>
<div class="a" style="left:322.8px;top:379.90000000000003px;width:18.4px;height:18.4px;background:#c68a76;border-radius:50%"></div>
<div class="t" style="left:322.80px;top:385.53px;font-size:8px;color:#6b3f33;font-weight:400;width:18.4px;text-align:center;letter-spacing:-0.2px">CR</div>
<div class="t" style="left:350.00px;top:385.30px;font-size:8.5px;color:#6f7684;font-weight:400;transform:scaleX(0.9212);transform-origin:0 0;">Colton Rowland</div>
<div class="t" style="left:458.20px;top:385.30px;font-size:8.5px;color:#6f7684;font-weight:400;transform:scaleX(0.9329);transform-origin:0 0;">Order Forms Auto Tax</div>
<div class="t" style="left:619.10px;top:385.22px;font-size:8.6px;color:#6f7684;font-weight:400;transform:scaleX(0.9419);transform-origin:0 0;">Jun 30 at 10:52 AM</div>
<div class="t" style="left:720.10px;top:385.14px;font-size:8.7px;color:#2f3646;font-weight:400;transform:scaleX(0.9650);transform-origin:0 0;-webkit-text-stroke:0.25px #2f3646">$99.00<svg width="9.4" height="9.4" viewBox="0 0 9.4 9.4" style="margin-left:3px;vertical-align:top;position:relative;top:-0.9px"><circle cx="4.7" cy="4.7" r="3.9" fill="none" stroke="#3b4350" stroke-width="0.95"/><path d="M4.7 4.3 L4.7 7" stroke="#3b4350" stroke-width="0.95"/><circle cx="4.7" cy="2.8" r="0.55" fill="#3b4350"/></svg></div>
<div class="a" style="left:800.3px;top:382.90000000000003px;width:28px;height:12.2px;background:#ecfbf2;border:0.9px solid #8be0ae;border-radius:6px;box-sizing:border-box"></div>
<div class="t" style="left:804.45px;top:386.31px;font-size:6.6px;color:#1e9e55;font-weight:400;transform:scaleX(1.0963);transform-origin:0 0;-webkit-text-stroke:0.25px #1e9e55">Active</div>
<svg class="a" style="left:893.5px;top:384.1px;" width="4" height="10" viewBox="0 0 4 10"><circle cx="2" cy="1" r="0.85" fill="#374151"/><circle cx="2" cy="4.6" r="0.85" fill="#374151"/><circle cx="2" cy="8.2" r="0.85" fill="#374151"/></svg>
<div class="a" style="left:232.8px;top:442.7px;width:686.3px;height:0.9px;background:#eef0f3"></div>
<div class="t" style="left:245.50px;top:421.30px;font-size:8.5px;color:#2f3646;font-weight:400;transform:scaleX(0.9353);transform-origin:0 0;-webkit-text-stroke:0.18px #2f3646">Authorize.Net</div>
<div class="a" style="left:322.8px;top:415.90000000000003px;width:18.4px;height:18.4px;background:#7686bd;border-radius:50%"></div>
<div class="t" style="left:322.80px;top:421.53px;font-size:8px;color:#3a4570;font-weight:400;width:18.4px;text-align:center;letter-spacing:-0.2px">MM</div>
<div class="t" style="left:350.00px;top:421.30px;font-size:8.5px;color:#6f7684;font-weight:400;transform:scaleX(0.9212);transform-origin:0 0;">Madonna Morrow</div>
<div class="t" style="left:458.20px;top:421.30px;font-size:8.5px;color:#6f7684;font-weight:400;transform:scaleX(0.9329);transform-origin:0 0;">Subscription for Madonna Morrow</div>
<div class="t" style="left:619.10px;top:421.22px;font-size:8.6px;color:#6f7684;font-weight:400;transform:scaleX(0.9419);transform-origin:0 0;">Jun 27 at 06:28 PM</div>
<div class="t" style="left:720.10px;top:421.14px;font-size:8.7px;color:#2f3646;font-weight:400;transform:scaleX(0.9650);transform-origin:0 0;-webkit-text-stroke:0.25px #2f3646">$200.00<svg width="9.4" height="9.4" viewBox="0 0 9.4 9.4" style="margin-left:3px;vertical-align:top;position:relative;top:-0.9px"><circle cx="4.7" cy="4.7" r="3.9" fill="none" stroke="#3b4350" stroke-width="0.95"/><path d="M4.7 4.3 L4.7 7" stroke="#3b4350" stroke-width="0.95"/><circle cx="4.7" cy="2.8" r="0.55" fill="#3b4350"/></svg></div>
<div class="a" style="left:800.3px;top:418.90000000000003px;width:28px;height:12.2px;background:#ecfbf2;border:0.9px solid #8be0ae;border-radius:6px;box-sizing:border-box"></div>
<div class="t" style="left:804.45px;top:422.31px;font-size:6.6px;color:#1e9e55;font-weight:400;transform:scaleX(1.0963);transform-origin:0 0;-webkit-text-stroke:0.25px #1e9e55">Active</div>
<svg class="a" style="left:893.5px;top:420.1px;" width="4" height="10" viewBox="0 0 4 10"><circle cx="2" cy="1" r="0.85" fill="#374151"/><circle cx="2" cy="4.6" r="0.85" fill="#374151"/><circle cx="2" cy="8.2" r="0.85" fill="#374151"/></svg>
<div class="a" style="left:232.8px;top:478.7px;width:686.3px;height:0.9px;background:#eef0f3"></div>
<div class="t" style="left:245.50px;top:457.30px;font-size:8.5px;color:#2f3646;font-weight:400;transform:scaleX(0.9353);transform-origin:0 0;-webkit-text-stroke:0.18px #2f3646">Authorize.Net</div>
<div class="a" style="left:322.8px;top:451.90000000000003px;width:18.4px;height:18.4px;background:#7686bd;border-radius:50%"></div>
<div class="t" style="left:322.80px;top:457.53px;font-size:8px;color:#3a4570;font-weight:400;width:18.4px;text-align:center;letter-spacing:-0.2px">MM</div>
<div class="t" style="left:350.00px;top:457.30px;font-size:8.5px;color:#6f7684;font-weight:400;transform:scaleX(0.9212);transform-origin:0 0;">Madonna Morrow</div>
<div class="t" style="left:458.20px;top:457.30px;font-size:8.5px;color:#6f7684;font-weight:400;transform:scaleX(0.9329);transform-origin:0 0;">Order Forms Auto Tax</div>
<div class="t" style="left:619.10px;top:457.22px;font-size:8.6px;color:#6f7684;font-weight:400;transform:scaleX(0.9419);transform-origin:0 0;">Jun 25 at 03:35 PM</div>
<div class="t" style="left:720.10px;top:457.14px;font-size:8.7px;color:#2f3646;font-weight:400;transform:scaleX(0.9650);transform-origin:0 0;-webkit-text-stroke:0.25px #2f3646">$99.00<svg width="9.4" height="9.4" viewBox="0 0 9.4 9.4" style="margin-left:3px;vertical-align:top;position:relative;top:-0.9px"><circle cx="4.7" cy="4.7" r="3.9" fill="none" stroke="#3b4350" stroke-width="0.95"/><path d="M4.7 4.3 L4.7 7" stroke="#3b4350" stroke-width="0.95"/><circle cx="4.7" cy="2.8" r="0.55" fill="#3b4350"/></svg></div>
<div class="a" style="left:800.3px;top:454.90000000000003px;width:31px;height:12.2px;background:#fef6eb;border:0.9px solid #fadfba;border-radius:6px;box-sizing:border-box"></div>
<div class="t" style="left:804.80px;top:458.31px;font-size:6.6px;color:#eea33f;font-weight:400;transform:scaleX(0.9839);transform-origin:0 0;-webkit-text-stroke:0.25px #eea33f">Expired</div>
<svg class="a" style="left:893.5px;top:456.1px;" width="4" height="10" viewBox="0 0 4 10"><circle cx="2" cy="1" r="0.85" fill="#374151"/><circle cx="2" cy="4.6" r="0.85" fill="#374151"/><circle cx="2" cy="8.2" r="0.85" fill="#374151"/></svg>
<div class="a" style="left:232.8px;top:514.7px;width:686.3px;height:0.9px;background:#eef0f3"></div>
<div class="t" style="left:245.50px;top:493.30px;font-size:8.5px;color:#2f3646;font-weight:400;transform:scaleX(0.9353);transform-origin:0 0;-webkit-text-stroke:0.18px #2f3646">Authorize.Net</div>
<div class="a" style="left:322.8px;top:487.90000000000003px;width:18.4px;height:18.4px;background:#9a79c4;border-radius:50%"></div>
<div class="t" style="left:322.80px;top:493.53px;font-size:8px;color:#4c3570;font-weight:400;width:18.4px;text-align:center;letter-spacing:-0.2px">KB</div>
<div class="t" style="left:350.00px;top:493.30px;font-size:8.5px;color:#6f7684;font-weight:400;transform:scaleX(0.9212);transform-origin:0 0;">Keane Beasley</div>
<div class="t" style="left:458.20px;top:493.30px;font-size:8.5px;color:#6f7684;font-weight:400;transform:scaleX(0.9329);transform-origin:0 0;">Order Forms Auto Tax</div>
<div class="t" style="left:619.10px;top:493.22px;font-size:8.6px;color:#6f7684;font-weight:400;transform:scaleX(0.9419);transform-origin:0 0;">Jun 25 at 11:42 AM</div>
<div class="t" style="left:720.10px;top:493.14px;font-size:8.7px;color:#2f3646;font-weight:400;transform:scaleX(0.9650);transform-origin:0 0;-webkit-text-stroke:0.25px #2f3646">$99.00<svg width="9.4" height="9.4" viewBox="0 0 9.4 9.4" style="margin-left:3px;vertical-align:top;position:relative;top:-0.9px"><circle cx="4.7" cy="4.7" r="3.9" fill="none" stroke="#3b4350" stroke-width="0.95"/><path d="M4.7 4.3 L4.7 7" stroke="#3b4350" stroke-width="0.95"/><circle cx="4.7" cy="2.8" r="0.55" fill="#3b4350"/></svg></div>
<div class="a" style="left:800.3px;top:490.90000000000003px;width:31px;height:12.2px;background:#fef6eb;border:0.9px solid #fadfba;border-radius:6px;box-sizing:border-box"></div>
<div class="t" style="left:804.80px;top:494.31px;font-size:6.6px;color:#eea33f;font-weight:400;transform:scaleX(0.9839);transform-origin:0 0;-webkit-text-stroke:0.25px #eea33f">Expired</div>
<svg class="a" style="left:893.5px;top:492.1px;" width="4" height="10" viewBox="0 0 4 10"><circle cx="2" cy="1" r="0.85" fill="#374151"/><circle cx="2" cy="4.6" r="0.85" fill="#374151"/><circle cx="2" cy="8.2" r="0.85" fill="#374151"/></svg>
<div class="a" style="left:0px;top:521px;width:120px;height:1px;background:#485060"></div>
<svg class="a" style="left:0px;top:517px;" width="5" height="5" viewBox="0 0 5 5"><path d="M0 0 Q0.5 4.5 5 5 L0 5 Z" fill="#111"/></svg>
<svg class="a" style="left:1026px;top:518px;" width="4" height="4" viewBox="0 0 4 4"><path d="M4 0 Q3.6 3.6 0 4 L4 4 Z" fill="#111"/></svg>
<div class="a" style="left:114px;top:500px;width:11px;height:11px;background:#34d399;border-radius:50%"></div>
<svg class="a" style="left:114px;top:500px;" width="11" height="11" viewBox="0 0 11 11"><path d="M6.4 3.2 L4.2 5.5 L6.4 7.8" fill="none" stroke="#1a4433" stroke-width="1.25"/></svg>

</body></html>
